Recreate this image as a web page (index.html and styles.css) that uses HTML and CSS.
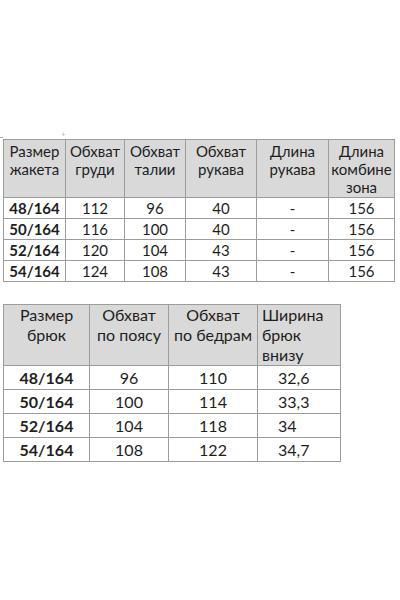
FILE: index.html
```html
<!DOCTYPE html>
<html lang="ru">
<head>
<meta charset="utf-8">
<title>Размеры</title>
<link rel="stylesheet" href="styles.css">
</head>
<body>
<div class="page">
  <div class="marks"><span class="tick"></span><span class="handle">+</span></div>
  <table class="t t1">
    <colgroup>
      <col class="c62"><col class="c59"><col class="c61"><col class="c71"><col class="c72"><col class="c66">
    </colgroup>
    <thead>
      <tr>
        <th>Размер<br>жакета</th>
        <th>Обхват<br>груди</th>
        <th>Обхват<br>талии</th>
        <th>Обхват<br>рукава</th>
        <th>Длина<br>рукава</th>
        <th>Длина<br>комбине<br>зона</th>
      </tr>
    </thead>
    <tbody>
      <tr><td class="b">48/164</td><td>112</td><td>96</td><td>40</td><td>-</td><td>156</td></tr>
      <tr><td class="b">50/164</td><td>116</td><td>100</td><td>40</td><td>-</td><td>156</td></tr>
      <tr><td class="b">52/164</td><td>120</td><td>104</td><td>43</td><td>-</td><td>156</td></tr>
      <tr><td class="b">54/164</td><td>124</td><td>108</td><td>43</td><td>-</td><td>156</td></tr>
    </tbody>
  </table>
  <table class="t t2">
    <colgroup>
      <col class="d86"><col class="d79"><col class="d89"><col class="d83">
    </colgroup>
    <thead>
      <tr>
        <th>Размер<br>брюк</th>
        <th>Обхват<br>по поясу</th>
        <th>Обхват<br>по бедрам</th>
        <th class="l">Ширина<br>брюк<br>внизу</th>
      </tr>
    </thead>
    <tbody>
      <tr><td class="b">48/164</td><td>96</td><td>110</td><td class="l2">32,6</td></tr>
      <tr><td class="b">50/164</td><td>100</td><td>114</td><td class="l2">33,3</td></tr>
      <tr><td class="b">52/164</td><td>104</td><td>118</td><td class="l2">34</td></tr>
      <tr><td class="b">54/164</td><td>108</td><td>122</td><td class="l2">34,7</td></tr>
    </tbody>
  </table>
</div>
</body>
</html>
```
FILE: styles.css
```css
html, body {
  margin: 0;
  padding: 0;
  background: #ffffff;
}
.page {
  position: relative;
  padding: 139px 0 0 3px;
  font-family: Lato, "Noto Sans", "Liberation Sans", sans-serif;
  color: #1e1e1e;
}
.marks {
  position: absolute;
  left: 0;
  top: 133px;
  width: 100%;
  height: 6px;
}
.tick {
  position: absolute;
  left: 0;
  top: 4px;
  width: 3px;
  height: 1px;
  background: #b0b0b0;
}
.handle {
  position: absolute;
  left: 61px;
  top: -3px;
  font-size: 8px;
  line-height: 8px;
  color: #b8b8b8;
}
.t {
  border-collapse: collapse;
  table-layout: fixed;
}
.t th, .t td {
  border: 1px solid #9c9c9c;
  padding: 0;
  text-align: center;
  font-weight: normal;
  overflow: hidden;
  white-space: nowrap;
}
.t th {
  background: #d9d9d9;
  vertical-align: top;
}
.t1 { width: 391px; font-size: 15px; }
.t1 th { height: 54px; line-height: 18px; padding-top: 2px; padding-bottom: 1px; }
.t1 td { height: 20px; line-height: 20px; }
.c62 { width: 62px; }
.c59 { width: 59px; }
.c61 { width: 61px; }
.c71 { width: 71px; }
.c72 { width: 72px; }
.c66 { width: 66px; }

.t2 { width: 337px; margin-top: 22px; font-size: 16px; }
.t2 th { height: 60px; line-height: 20px; }
.t2 td { height: 23px; line-height: 23px; }
.d86 { width: 86px; }
.d79 { width: 79px; }
.d89 { width: 89px; }
.d83 { width: 83px; }

.t .b { font-weight: bold; }
.t .l { text-align: left; padding-left: 4px; }
.t .l2 { text-align: left; padding-left: 20px; }
```
